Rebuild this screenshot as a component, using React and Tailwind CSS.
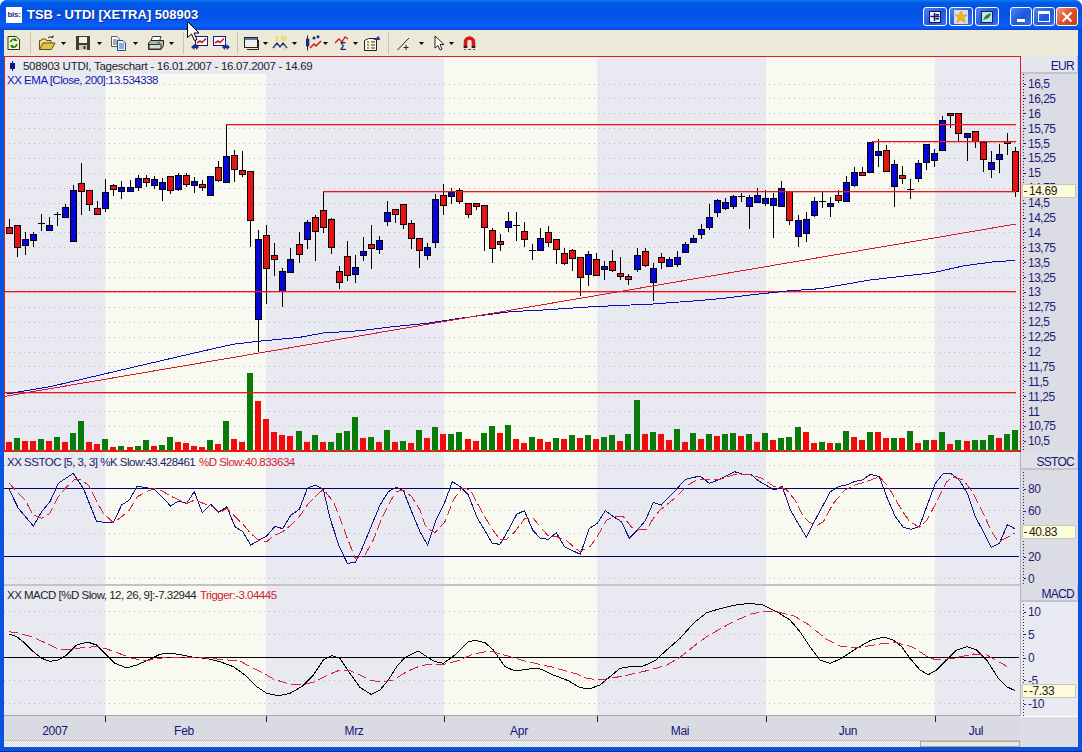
const FONT = 'font-["Liberation_Sans",Arial,sans-serif]'

// candles in page pixels: kind, wick top, body top, body bottom, wick bottom
const candles = [
  ['r',219,227,233,233],['r',225,225,247,257],['b',232,239,245,255],['b',232,234,240,247],['k',214,223,224,231],
  ['b',217,225,230,230],['k',212,214,215,226],['b',204,207,217,217],['b',185,190,241,241],['r',163,183,191,215],
  ['r',190,190,204,211],['r',201,208,214,215],['b',179,192,208,212],['r',184,185,189,196],['b',181,187,191,199],
  ['b',180,187,191,191],['b',175,178,187,191],['r',175,178,182,187],['b',176,179,185,189],['b',178,182,189,201],
  ['r',176,176,190,194],['b',173,175,189,191],['r',173,175,184,187],['b',177,181,185,193],['r',180,184,187,191],
  ['b',177,176,195,195],['r',161,167,180,182],['b',124,156,182,182],['r',150,155,169,182],['r',151,170,174,177],
  ['r',171,171,220,247],['b',230,239,319,352],['r',225,235,268,304],['r',243,255,259,276],['b',268,271,291,307],
  ['b',248,259,272,272],['r',232,244,254,263],['b',220,222,239,249],['r',215,217,231,261],['r',191,210,227,233],
  ['r',218,219,247,254],['r',266,271,282,289],['r',241,256,275,281],['b',255,267,274,283],
  ['b',237,251,255,261],['r',225,244,248,269],['b',236,240,249,254],['b',201,212,221,226],['r',209,209,214,223],
  ['r',204,204,224,229],['r',220,223,238,249],['r',238,238,250,268],['b',243,247,255,260],['b',194,199,242,248],
  ['r',184,195,205,215],['b',188,192,196,204],['r',188,190,201,204],['r',203,203,214,218],['r',203,203,206,210],
  ['r',205,205,227,251],['r',228,230,248,263],['r',234,241,244,251],['b',212,221,227,232],['k',212,225,226,241],
  ['r',222,231,239,247],['k',244,250,252,260],['b',228,238,250,250],['r',226,232,242,247],['r',239,239,249,264],
  ['r',248,253,263,265],['r',249,250,258,271],['r',257,257,277,296],['b',251,254,274,286],['r',253,259,275,276],
  ['b',261,266,269,280],['r',250,261,270,272],['r',257,273,276,280],['r',274,276,279,285],['b',248,255,269,272],
  ['r',248,251,265,267],['b',263,268,282,301],['r',253,257,262,269],['b',257,259,266,266],['b',251,257,264,267],
  ['b',242,244,252,252],['b',235,238,242,243],['b',224,229,234,239],['b',204,217,227,230],['b',199,200,212,217],
  ['b',198,202,208,210],['b',195,196,206,209],['k',193,196,197,202],['b',195,197,206,229],['b',188,195,202,203],
  ['b',190,198,203,206],['b',193,198,205,238],['b',181,188,206,207],['r',191,191,220,225],['b',215,220,236,247],
  ['b',212,219,233,242],['b',197,201,215,217],['k',192,201,202,208],['b',197,203,206,217],['r',190,195,200,203],
  ['b',176,182,201,201],['b',167,172,185,187],['r',167,172,175,175],['b',142,142,172,172],['b',139,151,155,167],
  ['r',145,150,171,172],['b',160,164,186,207],['r',166,175,178,184],['k',179,189,191,199],['b',160,163,178,182],
  ['b',144,144,162,170],['b',149,153,160,167],['b',116,120,150,150],['r',113,113,115,128],['r',113,113,133,141],
  ['b',133,133,137,161],['r',131,131,141,148],['r',142,142,159,172],['b',151,162,169,178],['b',144,154,159,173],
  ['r',133,141,143,155],['r',147,151,191,197],
]

// volume heights, negative = red bar
const volumes = [
  -9,13,-10,-10,12,-10,14,-9,18,30,-9,-7,12,-4,5,-4,5,11,-5,6,14,-9,-8,-5,-4,11,-7,30,-12,-9,78,-50,-32,-19,-16,-15,20,-9,16,-9,9,18,20,34,
  -13,14,-9,21,-9,10,-8,21,-13,24,-17,17,19,-12,-10,18,25,-18,26,-12,-8,14,-12,-9,13,-12,16,-13,16,-12,14,16,-10,17,51,-17,19,-17,-11,22,-9,18,-12,17,-15,
  17,18,-15,17,-9,18,-11,13,14,24,-19,-8,9,-8,8,20,-14,-11,19,-19,-13,13,-13,20,-8,11,-11,19,-7,11,-10,11,11,16,-13,17,21,
]

const candleX = (n) => Math.floor(9.3 + 8.048 * n)
const bands = [[4,101,'#e9e9f1'],[105,161,'#f8f9f0'],[266,178,'#e9e9f1'],[444,153,'#f8f9f0'],[597,169,'#e9e9f1'],[766,169,'#f8f9f0'],[935,86,'#e9e9f1']]

const ema = '6.7,394 50,386.7 100,375 150,363.3 200,351.7 233,344.3 258,341.3 300,337.3 323,333 360,330.7 393,326.7 427,323.3 460,318.3 510,311.7 543,310 593,306.7 653,304 693,301 720,298.7 753,294.7 787,291 820,288.7 870,280 933,272.7 963,266 997,261.3 1015,260.7'

// traced from 3x crops, so each block keeps its crop origin
const traced = (ox, oy, arr) => arr.map(([x, y]) => `${ox + x / 3},${oy + y / 3}`).join(' ')

const stochK = [
  traced(0,450,[[26,115],[55,175],[100,228],[125,185],[150,155],[175,100],[220,70],[250,115],[290,215],[340,218],[365,165],[388,150],[412,108],[463,118],[512,168],[535,153],[560,160],[583,125],[607,188],[632,163],[656,187],[680,170],[705,230],[728,245],[752,285],[800,258],[825,229],[848,236],[873,195],[898,178],[922,115],[945,105],[970,118],[990,205],[1018,290],[1042,340],[1066,337]]),
  traced(360,450,[[0,310],[25,250],[60,165],[85,125],[108,112],[130,122],[155,185],[180,245],[203,285],[230,205],[253,160],[277,95],[301,110],[325,135],[350,200],[397,280],[420,283],[445,240],[470,193],[493,182],[518,240],[541,265],[565,268],[589,248],[613,290],[661,313],[688,235],[712,220],[736,182],[760,200],[784,215],[808,265],[832,240],[856,212],[880,157],[904,165],[952,115],[976,88],[1020,78],[1048,100]]),
  traced(720,450,[[0,88],[43,65],[67,72],[91,72],[115,92],[163,120],[187,110],[211,180],[259,262],[283,215],[307,170],[331,125],[355,110],[379,105],[403,95],[427,90],[451,73],[478,80],[502,145],[526,200],[550,232],[574,238],[598,230],[622,165],[646,100],[670,70],[694,72],[718,90],[742,130],[766,200],[790,245],[814,292],[838,280],[862,224],[886,237]]),
].join(' ')

const stochD = [
  traced(0,450,[[26,98],[50,125],[75,150],[100,195],[125,205],[150,190],[175,140],[200,110],[225,88],[240,88],[265,105],[290,155],[310,190],[340,218],[365,200],[388,180],[412,140],[440,125],[465,115],[490,125],[515,140],[560,160],[585,150],[610,160],[640,170],[660,188],[680,175],[710,205],[735,230],[752,250],[775,270],[800,275],[820,258],[848,245],[873,225],[898,200],[922,165],[945,140],[970,118],[1000,155],[1020,205],[1042,265],[1066,325]]),
  traced(360,450,[[0,320],[15,315],[40,270],[65,205],[90,155],[110,125],[130,120],[155,140],[180,180],[195,225],[210,240],[225,248],[255,215],[280,150],[305,115],[330,118],[355,165],[380,210],[395,235],[420,268],[440,268],[465,245],[495,205],[520,205],[545,235],[565,258],[590,260],[620,272],[640,290],[660,305],[690,290],[705,270],[720,245],[740,210],[770,198],[790,200],[815,232],[835,240],[860,238],[880,205],[900,180],[950,140],[980,108],[1010,90],[1050,88]]),
  traced(720,450,[[0,88],[40,75],[90,72],[125,85],[163,110],[175,108],[200,120],[225,150],[245,190],[265,215],[290,227],[310,215],[340,160],[375,120],[410,103],[440,95],[478,80],[505,110],[530,155],[555,195],[570,215],[598,232],[620,212],[650,155],[680,95],[700,82],[730,90],[760,130],[790,190],[815,245],[835,275],[870,258],[886,248]]),
].join(' ')

const macdLine = [
  traced(0,450,[[26,552],[50,560],[75,580],[100,605],[125,625],[150,634],[175,630],[200,615],[230,585],[262,576],[290,585],[320,615],[345,640],[380,654],[410,645],[445,630],[480,613],[510,609],[545,615],[580,622],[620,625],[660,635],[700,650],[735,675],[770,710],[800,730],[835,737],[870,730],[905,710],[940,675],[970,630],[995,617],[1020,625],[1050,670]]),
  traced(360,450,[[0,712],[33,733],[60,720],[85,690],[110,650],[135,622],[175,603],[200,620],[225,635],[250,640],[285,615],[325,575],[345,571],[375,578],[400,600],[435,650],[465,663],[500,658],[525,654],[545,658],[580,675],[625,692],[660,713],[690,716],[720,705],[750,680],[780,655],[810,650],[850,648],[885,632],[920,600],[960,565],[1000,520],[1040,488]]),
  traced(720,450,[[0,476],[40,466],[90,460],[130,465],[170,485],[210,510],[240,545],[270,590],[300,630],[330,640],[365,625],[410,595],[450,572],[490,561],[520,570],[545,590],[570,625],[600,660],[625,674],[650,660],[680,630],[710,600],[740,590],[770,600],[800,630],[835,685],[860,710],[885,722]]),
].join(' ')

const macdTrigger = [
  traced(0,450,[[26,545],[50,548],[75,555],[100,562],[150,585],[175,597],[225,597],[250,592],[295,590],[320,597],[370,615],[395,625],[440,632],[470,625],[520,622],[590,622],[650,627],[720,633],[750,650],[800,675],[820,687],[870,703],[905,705],[945,695],[990,672],[1015,662],[1050,662]]),
  traced(360,450,[[0,675],[30,690],[65,697],[100,690],[140,665],[175,650],[205,643],[250,643],[295,632],[340,612],[390,603],[440,617],[490,632],[580,652],[650,672],[680,685],[720,690],[790,678],[870,660],[920,645],[960,622],[1010,582],[1040,560]]),
  traced(720,450,[[0,537],[40,515],[90,493],[130,484],[170,485],[220,497],[260,520],[295,548],[320,568],[365,590],[420,592],[480,582],[530,578],[580,592],[625,622],[650,630],[700,625],[760,612],[800,615],[835,635],[872,655]]),
].join(' ')

const priceTicks = ['16,5','16,25','16','15,75','15,5','15,25','15','14,75','14,5','14,25','14','13,75','13,5','13,25','13','12,75','12,5','12,25','12','11,75','11,5','11,25','11','10,75','10,5']
const priceY = (i) => 83.5 + i * 14.89

// support and resistance lines: x start, y
const levels = [[226,124],[323,191],[872,141],[4,291],[4,392]]

function Backdrop({ y, h, grid }) {
  return (
    <>
      {bands.map(([x, w, fill]) => <rect key={x} x={x} y={y} width={w} height={h} fill={fill} />)}
      {grid.map((g) => <line key={g} x1="4" x2="1020" y1={g + 0.5} y2={g + 0.5} stroke="#bdbdbd" strokeDasharray="1 4" />)}
    </>
  )
}

function PriceChart() {
  return (
    <svg viewBox="4 56 1017 396" shapeRendering="crispEdges" className="block w-[1017px] h-[396px]">
      <Backdrop y={56} h={396} grid={priceTicks.map((_, i) => Math.round(priceY(i)))} />
      {volumes.map((v, n) => (
        <rect key={n} x={candleX(n) - 3} y={451 - Math.abs(v)} width="6" height={Math.abs(v)} fill={v > 0 ? '#0a7a0a' : '#f40a0a'} />
      ))}
      <rect x="4" y="450" width="1017" height="2" fill="#f40a0a" />
      {volumes.map((v, n) => v > 0 && <rect key={n} x={candleX(n) - 3} y="450" width="6" height="2" fill="#7c6a0a" />)}
      {candles.map(([kind, wt, bt, bb, wb], n) => {
        const x = candleX(n)
        return (
          <g key={n}>
            <rect x={x} y={wt} width="1" height={wb - wt} fill="#000" />
            {kind === 'k'
              ? <rect x={x - 3} y={bt} width="7" height="1" fill="#000" />
              : <>
                  <rect x={x - 3} y={bt} width="7" height={bb - bt + 1} fill="#000" />
                  <rect x={x - 2} y={bt + 1} width="5" height={Math.max(bb - bt - 1, 1)} fill={kind === 'r' ? '#e81212' : '#0606d8'} />
                </>}
          </g>
        )
      })}
      {levels.map(([x, y]) => (
        <g key={y}>
          <rect x={x} y={y} width={1016 - x} height="1" fill="#f01418" />
          <rect x={x} y={y + 1} width={1016 - x} height="1" fill="#f01418" fillOpacity="0.3" />
        </g>
      ))}
      <g fill="none">
        <polyline points={ema} stroke="#0c0cb4" />
        <line x1="4" y1="396.5" x2="1016" y2="224" stroke="#d81c2c" />
      </g>
      <rect x="4.5" y="56.5" width="1016" height="395" fill="none" stroke="#e01c1c" />
    </svg>
  )
}

function StochChart() {
  return (
    <svg viewBox="4 452 1017 132" shapeRendering="crispEdges" className="block w-[1017px] h-[132px]">
      <Backdrop y={452} h={132} grid={[465, 510, 533, 578]} />
      <path d="M4 488.5H1019M4 556.5H1019" stroke="#000070" />
      <rect x="1020" y="452" width="1" height="132" fill="#b4b4b8" />
      <g fill="none">
        <polyline points={stochK} stroke="#14147c" />
        <polyline points={stochD} stroke="#d8203c" strokeDasharray="10 4" />
      </g>
    </svg>
  )
}

function MacdChart() {
  return (
    <svg viewBox="4 584 1017 132" shapeRendering="crispEdges" className="block w-[1017px] h-[132px]">
      <Backdrop y={584} h={132} grid={[611, 634, 680, 703]} />
      <rect x="4" y="584" width="1017" height="2" fill="#c4c4c8" />
      <path d="M4 657.5H1019" stroke="#000" />
      <rect x="4" y="715" width="1017" height="1" fill="#a8a8ac" />
      <rect x="1020" y="584" width="1" height="132" fill="#b4b4b8" />
      <g fill="none">
        <polyline points={macdLine} stroke="#000" />
        <polyline points={macdTrigger} stroke="#d8203c" strokeDasharray="10 4" />
      </g>
    </svg>
  )
}

function AxisLabels({ ticks }) {
  return ticks.map(([label, y]) => (
    <g key={label}>
      <rect x="1024" y={Math.round(y)} width="2" height="1" fill="#20206e" />
      <text x="1028" y={y + 4.5} fontSize="12" letterSpacing="-0.5" fill="#1c1c78">{label}</text>
    </g>
  ))
}

function ValueBox({ y, text }) {
  return (
    <g>
      <rect x="1022.5" y={y + 0.5} width="53" height="13" fill="#fdfbd8" stroke="#c8c8b8" />
      <rect x="1024" y={y + 7} width="3" height="1" fill="#333" />
      <text x="1029" y={y + 11} fontSize="12" letterSpacing="-0.4" fill="#222">{text}</text>
    </g>
  )
}

function AxisHeader({ label, bg }) {
  return (
    <div className={`h-[18px] shrink-0 flex items-center justify-end pt-[3px] pr-[3px] text-[12px] tracking-[-0.7px] text-[#14147a] border-b-2 border-r border-[#c2c2c8] ${bg}`}>
      {label}
    </div>
  )
}

function Legend({ children, className = '' }) {
  return <div className={`absolute left-[3px] text-[11.5px] leading-[14px] whitespace-nowrap ${className}`}>{children}</div>
}

function Caret({ className = '' }) {
  return (
    <svg viewBox="0 0 5 3" className={`w-[5px] h-[3px] shrink-0 ${className}`}>
      <path d="M0 0H5L2.5 3Z" fill="#000" />
    </svg>
  )
}

function Sep({ className = '' }) {
  return <div className={`w-[2px] h-[22px] shrink-0 border-l border-[#c8c5b2] border-r-white ${className}`} />
}

function Ico({ w, className = '', children }) {
  return (
    <svg viewBox={`0 0 ${w} 16`} width={w} height="16" className={`shrink-0 ${className}`}>
      {children}
    </svg>
  )
}

function Toolbar() {
  return (
    <div className="h-[26px] shrink-0 flex items-center bg-[#ece9d8]">
      {/* refresh */}
      <Ico w={15} className="ml-[2px]">
        <path d="M2 1.5H10L13.5 4.5V14.5H2Z" fill="#fbf7c8" stroke="#333" />
        <path d="M4.5 7A3.5 3.5 0 0 1 10 5" fill="none" stroke="#0a9a22" strokeWidth="1.8" />
        <path d="M11 9A3.5 3.5 0 0 1 5.5 11.5" fill="none" stroke="#0a9a22" strokeWidth="1.8" />
        <path d="M9 3L11.5 6H8ZM6.5 13L4 10H7.5Z" fill="#0a7a18" />
      </Ico>
      <Sep className="ml-[9px]" />
      {/* open */}
      <Ico w={17} className="ml-[7px]">
        <path d="M0.5 14.5V5.5H2L3 4H6.5L7.5 5.5H12V8" fill="#f4dc74" stroke="#5e5218" />
        <path d="M0.5 14.5L4 8H16L12.5 14.5Z" fill="#e2c24e" stroke="#5e5218" />
        <path d="M9 3Q11 0.5 14 2.5M14 2.5V0.5M14 2.5H12" fill="none" stroke="#222" />
      </Ico>
      <Caret className="ml-[5px]" />
      {/* save */}
      <Ico w={14} className="ml-[10px]">
        <rect x="0" y="1" width="14" height="14" fill="#3e3e28" />
        <rect x="3" y="2" width="8" height="6" fill="#f2f2ea" />
        <rect x="3" y="10" width="8" height="5" fill="#c8c8bc" />
        <rect x="7.5" y="11" width="2" height="3" fill="#333" />
      </Ico>
      <Caret className="ml-[7px]" />
      {/* copy */}
      <Ico w={15} className="ml-[9px]">
        <path d="M0.5 1.5H6L8 3.5V11.5H0.5Z" fill="#fff" stroke="#555" />
        <path d="M2 5H6M2 7H6M2 9H6" stroke="#555" />
        <path d="M6.5 5.5H12L14.5 8V15.5H6.5Z" fill="#eaf2fb" stroke="#1c4f8c" />
        <path d="M8 9H13M8 11H13M8 13H13" stroke="#2a66ac" />
      </Ico>
      <Caret className="ml-[7px]" />
      {/* print */}
      <Ico w={16} className="ml-[10px]">
        <path d="M4.5 1.5H13L11.5 6H3Z" fill="#fff" stroke="#333" />
        <path d="M0.5 8L3 5.5H15.5V10.5L13 14.5H0.5Z" fill="#b4b4ac" stroke="#222" />
        <path d="M1 9.5H13V14H1Z" fill="#d8d8d0" stroke="#333" />
        <rect x="9" y="7" width="3" height="1.5" fill="#14a03c" />
      </Ico>
      <Caret className="ml-[5px]" />
      <Sep className="ml-[9px]" />
      {/* chart with arrow left */}
      <Ico w={17} className="ml-[6px]">
        <rect x="4.5" y="1.5" width="12" height="9" fill="#fff" stroke="#1a1a80" />
        <path d="M6 8L9 6L11 7.5L15 3.5" fill="none" stroke="#e01010" strokeWidth="1.6" />
        <path d="M0 12L4 9V11H5V9L8 12L5 15V13H3.5V15Z" fill="#10308c" />
      </Ico>
      {/* chart with arrow right */}
      <Ico w={17} className="ml-[5px]">
        <rect x="0.5" y="1.5" width="12" height="9" fill="#fff" stroke="#1a1a80" />
        <path d="M2 8L5 6L7 7.5L11 3.5" fill="none" stroke="#e01010" strokeWidth="1.6" />
        <path d="M9 12L13 9V11H13.5V9L17 12L13.5 15V13H12V15Z" fill="#10308c" />
      </Ico>
      <Sep className="ml-[7px]" />
      {/* windows */}
      <Ico w={17} className="ml-[5px]">
        <rect x="0.5" y="2.5" width="13" height="10" fill="#f0f0e8" stroke="#222" />
        <rect x="1" y="3" width="12" height="2" fill="#5a76b8" />
        <path d="M14.5 5V14.5H3" fill="none" stroke="#222" />
      </Ico>
      <Caret className="ml-[2px]" />
      {/* 3M */}
      <Ico w={18} className="ml-[4px]">
        <text x="3" y="6" fontSize="7" fontWeight="700" fill="#e8d84a">3</text>
        <text x="9" y="6" fontSize="7" fontWeight="700" fill="#e8d84a">M</text>
        <path d="M1 13L5 8L8 12L11 8L15 13" fill="none" stroke="#1a2a80" strokeWidth="1.3" />
        <text x="11" y="15" fontSize="6" fontWeight="700" fill="#e8d84a">1</text>
      </Ico>
      <Caret className="ml-[2px]" />
      {/* candles */}
      <Ico w={16} className="ml-[9px]">
        <path d="M1.5 0.5V15.5" stroke="#222" />
        <rect x="0" y="4" width="3" height="7" fill="#0a2ab8" stroke="#222" strokeWidth="0.5" />
        <path d="M4 13L8 9L10 11L15 6" fill="none" stroke="#e01010" strokeWidth="1.5" />
        <circle cx="8" cy="3" r="1.5" fill="#1a2a80" />
        <circle cx="12" cy="1.8" r="1.5" fill="#1a2a80" />
      </Ico>
      <Caret className="ml-[1px]" />
      {/* sigma */}
      <Ico w={16} className="ml-[7px]">
        <path d="M0 8L4 4L7 7L10 2L13 4" fill="none" stroke="#d81818" strokeWidth="1.3" />
        <text x="5" y="15" fontSize="10" fontWeight="700" fill="#162478">Σ</text>
      </Ico>
      <Caret className="ml-[2px]" />
      {/* properties */}
      <Ico w={17} className="ml-[6px]">
        <path d="M0.5 5.5L4.5 3.5H12.5V15.5H0.5Z" fill="#fbf8d8" stroke="#222" />
        <path d="M3 7H5M7 7H11M3 10H5M7 10H11M3 13H5M7 13H11" stroke="#333" />
        <path d="M9 5L15 1L16 5Z" fill="#1a3a9c" />
      </Ico>
      <Sep className="ml-[7px]" />
      {/* trend line */}
      <Ico w={16} className="ml-[7px]">
        <path d="M0.5 15L12 3" stroke="#222" fill="none" />
        <path d="M9 10V15M6.5 12.5H11.5" stroke="#222" fill="none" />
      </Ico>
      <Caret className="ml-[6px]" />
      {/* pointer */}
      <Ico w={11} className="ml-[10px]">
        <path d="M1 1V13L4 10.5L6 15L8 14L6 9.5H10Z" fill="#fff" stroke="#222" />
      </Ico>
      <Caret className="ml-[4px]" />
      {/* magnet */}
      <Ico w={15} className="ml-[8px]">
        <path d="M3.5 12V7A4 4 0 0 1 11.5 7V12" fill="none" stroke="#d81818" strokeWidth="3.6" />
        <path d="M1.7 11H5.3V13H1.7ZM9.7 11H13.3V13H9.7Z" fill="#222" />
        <path d="M2 14.5H4M6 14.5H9M11 14.5H13" stroke="#555" />
      </Ico>
    </div>
  )
}

function CapButton({ className = '', children }) {
  return (
    <div className={`h-[19px] flex items-center justify-center rounded-[3px] border border-white ${className}`}>
      {children}
    </div>
  )
}

const blueCap = 'bg-[linear-gradient(135deg,#4f86f2_0%,#1d55e0_55%,#3a70ea_100%)]'

function TitleBar() {
  return (
    <div className="h-[30px] shrink-0 flex items-center pl-[6px] pr-[4px] rounded-t-[7px] bg-[linear-gradient(180deg,#0a7cf0_0%,#0058e6_10%,#0450e4_45%,#0a5cf6_85%,#0458ea_94%,#0a3cc8_100%)]">
      <div className="w-4 h-4 shrink-0 bg-white flex items-center justify-center">
        <span className="text-[8px] font-bold text-[#20307c] tracking-[-0.3px]">bis:</span>
      </div>
      <span className="ml-[5px] text-white font-bold text-[13px] [text-shadow:1px_1px_#0f2a90]">TSB - UTDI [XETRA] 508903</span>
      <div className="ml-auto mt-[3px] flex items-center gap-[2px]">
        <CapButton className={`w-[24px] ${blueCap}`}>
          <svg viewBox="0 0 12 12" className="w-3 h-3">
            <rect x="0.5" y="0.5" width="11" height="11" fill="#f4f4fa" stroke="#10106c" />
            <path d="M5.5 2V10M1.5 5.5H10.5" stroke="#10106c" strokeWidth="1.4" />
            <rect x="6.5" y="3" width="3.5" height="1.5" fill="#10106c" />
            <rect x="6.5" y="7" width="3.5" height="1.5" fill="#10106c" />
          </svg>
        </CapButton>
        <CapButton className={`w-[24px] ${blueCap}`}>
          <svg viewBox="0 0 14 14" className="w-[14px] h-[14px]">
            <rect width="14" height="14" fill="#d8dce8" />
            <path d="M7 1L8.8 5H13L9.7 7.8L11 12.5L7 9.8L3 12.5L4.3 7.8L1 5H5.2Z" fill="#f2b812" stroke="#c88a10" strokeWidth="0.5" />
          </svg>
        </CapButton>
        <CapButton className={`w-[24px] ${blueCap}`}>
          <svg viewBox="0 0 12 12" className="w-3 h-3">
            <rect x="0.5" y="0.5" width="11" height="11" fill="#c4e4e8" stroke="#12206c" />
            <path d="M2 10Q3 4 10 2Q9 8 4 8Z" fill="#1e8a2a" />
          </svg>
        </CapButton>
        <div className="ml-[9px] flex items-center gap-[1px]">
          <CapButton className={`w-[22px] items-end pb-[3px] ${blueCap}`}>
            <div className="w-[8px] h-[3px] bg-white" />
          </CapButton>
          <CapButton className={`w-[22px] ${blueCap}`}>
            <div className="w-[12px] h-[11px] border border-white border-t-[3px]" />
          </CapButton>
          <CapButton className="w-[22px] bg-[linear-gradient(135deg,#f09a80_0%,#e0502a_50%,#c83c14_100%)]">
            <svg viewBox="0 0 12 12" className="w-3 h-3">
              <path d="M1.5 1.5L10.5 10.5M10.5 1.5L1.5 10.5" stroke="#fff" strokeWidth="2.2" />
            </svg>
          </CapButton>
        </div>
      </div>
    </div>
  )
}

export default function App() {
  return (
    <div className={`relative w-[1082px] h-[752px] overflow-hidden flex flex-col rounded-t-[7px] bg-[#0a52e2] ${FONT}`}>
      <TitleBar />
      <div className="flex-1 min-h-0 flex flex-col pl-[4px] pr-[4px] pb-[4px] border-b border-[#0032a8]">
        <Toolbar />

        {/* price pane */}
        <div className="flex h-[396px]">
          <div className="relative w-[1017px]">
            <PriceChart />
            <Legend className="top-[2px] flex items-center pl-[2px] pr-[8px] py-[1px] bg-[#e9e9f1] text-[#222] tracking-[-0.28px]">
              <svg viewBox="0 0 7 10" className="w-[7px] h-[10px] mr-[7px]"><path d="M3 0H4V2H6V8H4V10H3V8H1V2H3Z" fill="#10108c" /></svg>
              508903 UTDI, Tageschart - 16.01.2007 - 16.07.2007 - 14.69
            </Legend>
            <Legend className="top-[17px] text-[#1414b4] tracking-[-0.48px]">XX EMA [Close, 200]:13.534338</Legend>
          </div>
          <div className="w-[57px] flex flex-col bg-[#dcdce4]">
            <AxisHeader label="EUR" bg="bg-[#e6e6ee]" />
            <svg viewBox="1021 74 57 378" className="block w-[57px] h-[378px]">
              <path d="M1023.5 74V452" stroke="#20206e" strokeDasharray="1 2" />
              <AxisLabels ticks={priceTicks.map((t, i) => [t, priceY(i)])} />
              <ValueBox y={184} text="14.69" />
            </svg>
          </div>
        </div>

        {/* stochastic pane */}
        <div className="flex h-[132px]">
          <div className="relative w-[1017px]">
            <StochChart />
            <Legend className="top-[3px] text-[#20206a] tracking-[-0.5px]">
              XX SSTOC [5, 3, 3] %K Slow:43.428461 <span className="ml-[1px] text-[#d01c34]">%D Slow:40.833634</span>
            </Legend>
          </div>
          <div className="w-[57px] flex flex-col bg-[#dcdce4]">
            <AxisHeader label="SSTOC" bg="bg-[#e0e0e6]" />
            <svg viewBox="1021 470 57 114" className="block w-[57px] h-[114px]">
              <path d="M1023.5 472V584" stroke="#20206e" strokeDasharray="1 2" />
              <AxisLabels ticks={[['80', 488.5], ['60', 510.5], ['20', 556.5], ['0', 578]]} />
              <ValueBox y={525} text="40.83" />
            </svg>
          </div>
        </div>

        {/* macd pane */}
        <div className="flex h-[132px]">
          <div className="relative w-[1017px]">
            <MacdChart />
            <Legend className="top-[4px] text-[#222] tracking-[-0.5px]">
              XX MACD [%D Slow, 12, 26, 9]:-7.32944 <span className="ml-[1px] text-[#d01c34]">Trigger:-3.04445</span>
            </Legend>
          </div>
          <div className="w-[57px] flex flex-col bg-[#e9e9f1]">
            <AxisHeader label="MACD" bg="bg-[#dcdce4]" />
            <svg viewBox="1021 602 57 114" className="block w-[57px] h-[114px]">
              <path d="M1023.5 604V716" stroke="#20206e" strokeDasharray="1 2" />
              <AxisLabels ticks={[['10', 611.5], ['5', 634], ['0', 657.5], ['-5', 680], ['-10', 703.5]]} />
              <ValueBox y={684} text="-7.33" />
            </svg>
          </div>
        </div>

        {/* date axis and scrollbar */}
        <div className="flex flex-1 min-h-0">
          <div className="w-[1016px] flex flex-col">
            <svg viewBox="4 716 1016 24" className="block w-[1016px] h-[24px] bg-[#dadae2]">
              {[105, 266, 444, 597, 766, 935].map((x) => <rect key={x} x={x} y="716" width="1" height="6" fill="#222" />)}
              {[['2007', 55], ['Feb', 184], ['Mrz', 354], ['Apr', 519], ['Mai', 680], ['Jun', 848], ['Jul', 976]].map(([t, x]) => (
                <text key={t} x={x} y="735" textAnchor="middle" fontSize="12" letterSpacing="-0.3" fill="#14147a">{t}</text>
              ))}
            </svg>
            <div className="flex-1 flex border-t border-[#c4c4b8]">
              <div className="flex-1 bg-[image:repeating-conic-gradient(#d4d4d4_0_25%,#fff_0_50%)] bg-[length:2px_2px]" />
              <div className="w-[100px] bg-[#e8e8e0] border border-[#a8a8a4]" />
            </div>
          </div>
          <div className="w-[58px] bg-[#dcdce4] border-t border-white" />
        </div>
      </div>

      {/* mouse pointer caught in the screenshot */}
      <svg viewBox="0 0 13 20" className="absolute left-[187px] top-[21px] w-[13px] h-[20px]">
        <path d="M0.5 0.5V16.5L4.5 13L7.5 19.5L10 18.5L7 12H12Z" fill="#fff" stroke="#000" />
      </svg>
    </div>
  )
}
